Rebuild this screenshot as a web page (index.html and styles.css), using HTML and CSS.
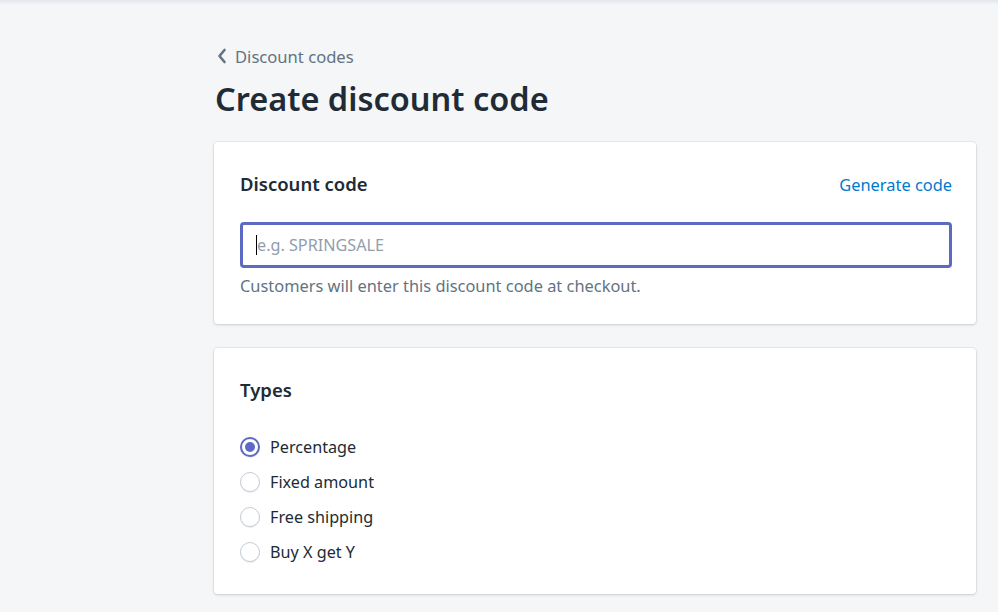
FILE: index.html
```html
<!DOCTYPE html>
<html>
<head>
<meta charset="utf-8">
<link rel="stylesheet" href="styles.css">
</head>
<body>
<div class="topshadow"></div>
<main class="page">
  <a class="breadcrumb" href="#">
    <svg class="chev" width="10" height="16" viewBox="0 0 10 16"><path d="M7.5 2 L2.5 8 L7.5 14" fill="none" stroke="#637381" stroke-width="2.6" stroke-linecap="round" stroke-linejoin="round"/></svg>
    <span>Discount codes</span>
  </a>
  <h1 class="title">Create discount code</h1>

  <section class="card">
    <div class="card-head">
      <h2 class="card-title">Discount code</h2>
      <a class="link" href="#">Generate code</a>
    </div>
    <div class="field">
      <span class="caret"></span><span class="placeholder">e.g. SPRINGSALE</span>
    </div>
    <p class="help">Customers will enter this discount code at checkout.</p>
  </section>

  <section class="card card-types">
    <h2 class="card-title">Types</h2>
    <ul class="radios">
      <li class="radio-row"><span class="radio checked"></span><span>Percentage</span></li>
      <li class="radio-row"><span class="radio"></span><span>Fixed amount</span></li>
      <li class="radio-row"><span class="radio"></span><span>Free shipping</span></li>
      <li class="radio-row"><span class="radio"></span><span>Buy X get Y</span></li>
    </ul>
  </section>
</main>
</body>
</html>
```
FILE: styles.css
```css
html, body {
  margin: 0;
  padding: 0;
  background: #f4f6f8;
  height: 612px;
  overflow: hidden;
}
body {
  font-family: "Noto Sans", "Open Sans", sans-serif;
  color: #212b36;
  position: relative;
}
.topshadow {
  height: 5px;
  background: linear-gradient(#e3e6ea, #f4f6f8);
}
.page {
  padding: 39px 22px 0 214px;
}
.breadcrumb {
  display: flex;
  align-items: center;
  gap: 8px;
  color: #637381;
  text-decoration: none;
  font-size: 16.6px;
  height: 24px;
  padding-left: 3px;
}
.title {
  margin: 11px 0 0 1px;
  font-size: 32.5px;
  font-weight: 600;
  line-height: 40px;
  color: #212b36;
}
.card {
  background: #fff;
  border-radius: 4px;
  box-shadow: 0 0 0 1px rgba(63,63,68,0.06), 0 1px 3px rgba(63,63,68,0.18);
  margin-top: 23px;
  padding: 27px 24px 26px 26px;
}
.card-types {
  margin-top: 24px;
  padding-bottom: 30px;
}
.card-head {
  display: flex;
  justify-content: space-between;
  align-items: center;
}
.card-title {
  margin: 0;
  font-size: 18.5px;
  font-weight: 600;
  line-height: 30px;
}
.link {
  color: #007ace;
  text-decoration: none;
  font-size: 16.4px;
}
.field {
  margin-top: 23px;
  height: 40px;
  border: 3px solid #5c6ac4;
  border-radius: 4px;
  display: flex;
  align-items: center;
  padding-left: 13px;
}
.caret {
  width: 1px;
  height: 20px;
  background: #000;
}
.placeholder {
  color: #919eab;
  font-size: 16.2px;
}
.help {
  margin: 6px 0 0;
  color: #637381;
  font-size: 16.4px;
  line-height: 24px;
}
.radios {
  list-style: none;
  margin: 30px 0 0;
  padding: 0;
  display: flex;
  flex-direction: column;
  gap: 11px;
}
.radio-row {
  display: flex;
  align-items: center;
  gap: 10px;
  height: 24px;
  font-size: 16.2px;
}
.radio {
  width: 18px;
  height: 18px;
  border-radius: 50%;
  border: 1px solid #c4cdd5;
  box-shadow: 0 1px 0 0 rgba(22,29,37,0.08);
  background: #fff;
  position: relative;
}
.radio.checked {
  border: 2px solid #5c6ac4;
  width: 16px;
  height: 16px;
}
.radio.checked::after {
  content: "";
  position: absolute;
  left: 3px;
  top: 3px;
  width: 10px;
  height: 10px;
  border-radius: 50%;
  background: #5c6ac4;
}
```
